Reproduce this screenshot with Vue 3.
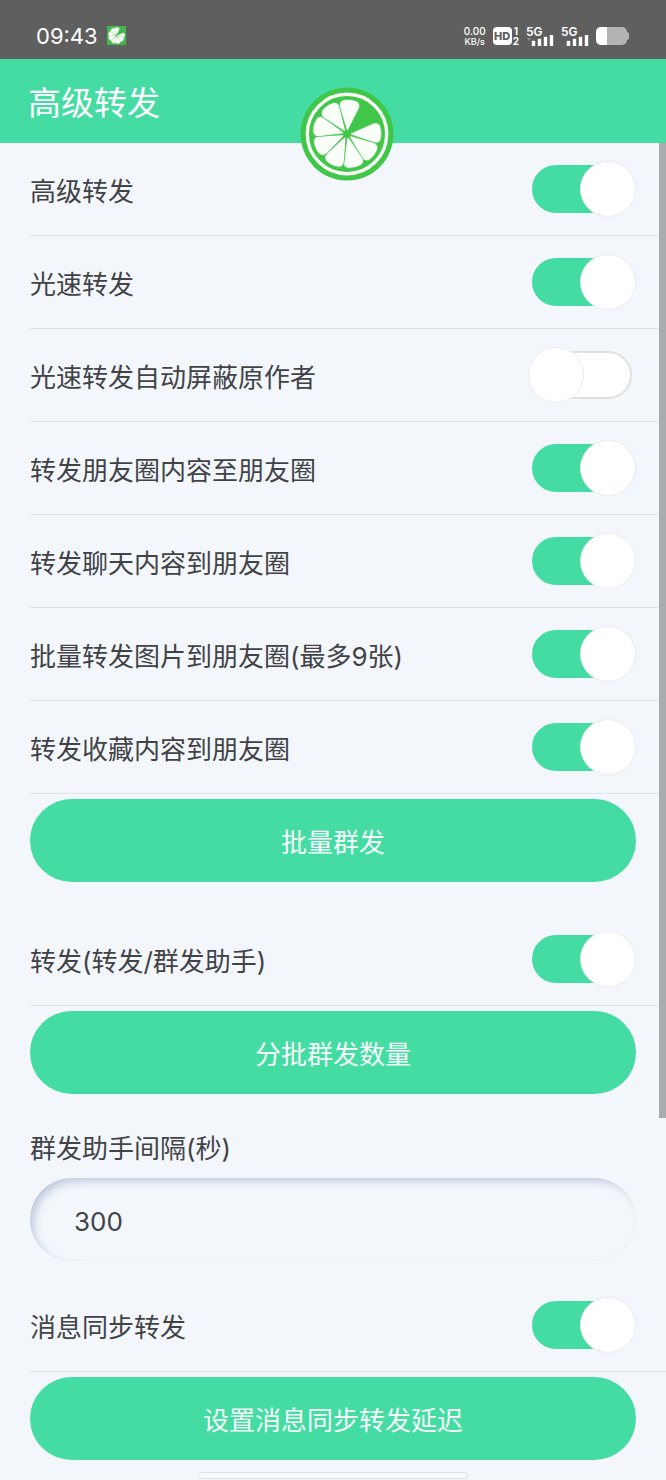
<template>
  <div class="page">
    <div class="status-bar">
      <span class="time">09:43</span>
      <svg class="app-icon" viewBox="0 0 20 20">
        <rect width="20" height="20" fill="#45b650" />
        <g transform="translate(10 10) scale(0.25)">
          <path v-for="a in slices" :key="a" :d="slicePath" :transform="`rotate(${a})`" fill="#f4fff2" />
        </g>
      </svg>
      <div class="status-right">
        <div class="speed">
          <span class="speed-num">0.00</span>
          <span class="speed-unit">KB/s</span>
        </div>
        <div class="hd">
          <span class="hd-badge">HD</span>
          <span class="hd-sim"><span>1</span><span>2</span></span>
        </div>
        <div v-for="sim in 2" :key="sim" class="signal">
          <span>5G</span>
          <svg viewBox="0 0 28 11">
            <path v-if="sim === 1" d="M1 3h4l-2 3z" fill="#8c8c8c" />
            <path d="M6 6h3v5h-3zM12 4h3v7h-3zM18 2h3v9h-3zM24 0h3v11h-3z" fill="#fff" stroke="#fff" stroke-width="0.4" />
          </svg>
        </div>
        <svg class="battery" viewBox="0 0 34 18">
          <rect x="29" y="5" width="4" height="8" rx="2" fill="#b4b4b4" />
          <rect width="31" height="18" rx="5" fill="#b4b4b4" />
          <path d="M11 0H5a5 5 0 0 0-5 5v8a5 5 0 0 0 5 5h6z" fill="#fff" />
        </svg>
      </div>
    </div>

    <header class="header">
      <h1>高级转发</h1>
      <svg class="logo" viewBox="-47 -47 94 94">
        <circle r="46.5" fill="#40c648" />
        <circle r="39.7" fill="none" stroke="#f8fff5" stroke-width="3.4" />
        <path
          v-for="a in slices"
          :key="a"
          :d="slicePath"
          :transform="`rotate(${a})`"
          fill="#fbfffa"
          stroke="#40c648"
          stroke-width="0.7"
        />
        <circle r="4" fill="#40c648" />
      </svg>
    </header>

    <main>
      <label v-for="item in forwardItems" :key="item.name" class="row">
        <span>{{ item.name }}</span>
        <input v-model="item.on" type="checkbox" class="switch" />
      </label>
      <button class="btn">批量群发</button>

      <label class="row row-helper">
        <span>转发(转发/群发助手)</span>
        <input v-model="helper" type="checkbox" class="switch" />
      </label>
      <button class="btn">分批群发数量</button>

      <label class="field-label" for="interval">群发助手间隔(秒)</label>
      <input id="interval" v-model="interval" class="field" type="text" />

      <label class="row row-sync">
        <span>消息同步转发</span>
        <input v-model="sync" type="checkbox" class="switch" />
      </label>
      <button class="btn">设置消息同步转发延迟</button>
      <div class="scrollbar"></div>
    </main>

    <div class="home-bar"></div>
  </div>
</template>

<script setup>
import { ref } from "vue";

const forwardItems = ref([
  { name: "高级转发", on: true },
  { name: "光速转发", on: true },
  { name: "光速转发自动屏蔽原作者", on: false },
  { name: "转发朋友圈内容至朋友圈", on: true },
  { name: "转发聊天内容到朋友圈", on: true },
  { name: "批量转发图片到朋友圈(最多9张)", on: true },
  { name: "转发收藏内容到朋友圈", on: true },
]);

const helper = ref(true);
const sync = ref(true);
const interval = ref("300");

// 青柠果瓣,缺右上角一瓣
const slices = [88, 128, 167, 206, 246, 285, 325, 365];
const slicePath = "M0 -2L-9.6 -26Q-11.5 -31 -7 -33.5Q0 -36 7 -33.5Q11.5 -31 9.6 -26Z";
</script>

<style>
body {
  margin: 0;
  background: #f3f7fc;
}
</style>

<style scoped>
.page {
  min-height: 100vh;
  background: #f3f7fc;
  color: #414347;
  font-family: Inter, "Noto Sans CJK SC", sans-serif;
  font-size: 26px;
}

.status-bar {
  display: flex;
  align-items: center;
  box-sizing: border-box;
  height: 59px;
  padding: 12px 36px 0;
  background: #5f5f5f;
  color: #fff;
}

.time {
  font-size: 22px;
}

.app-icon {
  width: 19px;
  height: 19px;
  margin-left: 9px;
}

.status-right {
  display: flex;
  align-items: center;
  margin-left: auto;
  gap: 7px;
}

.speed {
  display: flex;
  flex-direction: column;
  align-items: center;
  font-weight: 500;
}

.speed-num {
  font-size: 10px;
  line-height: 12px;
}

.speed-unit {
  font-size: 9px;
  line-height: 10px;
}

.hd {
  display: flex;
  align-items: center;
  gap: 1px;
}

.hd-badge {
  width: 19px;
  height: 18px;
  border-radius: 4px;
  background: #fff;
  color: #5f5f5f;
  font-size: 11px;
  font-weight: 800;
  line-height: 18px;
  text-align: center;
}

.hd-sim {
  display: flex;
  flex-direction: column;
  align-items: center;
  font-size: 10px;
  font-weight: 700;
  line-height: 10px;
}

.signal {
  display: flex;
  flex-direction: column;
  width: 28px;
  height: 20px;
  font-size: 12px;
  font-weight: 600;
  line-height: 11px;
}

.signal svg {
  width: 28px;
  height: 11px;
  margin-top: -2px;
}

.battery {
  width: 34px;
  height: 18px;
}

.header {
  position: relative;
  display: flex;
  align-items: center;
  height: 84px;
  padding: 0 28px;
  background: #45dca4;
}

.header h1 {
  margin: 0;
  color: #fff;
  font-size: 33px;
  font-weight: 400;
}

.logo {
  position: absolute;
  z-index: 1;
  top: 28px;
  left: 45%;
  width: 94px;
  height: 94px;
}

main {
  position: relative;
  padding-left: 30px;
}

.row {
  display: flex;
  align-items: center;
  justify-content: space-between;
  box-sizing: border-box;
  height: 93px;
  padding-right: 30px;
  border-bottom: 1px solid #e0e4e9;
}

.row-helper {
  margin-top: 31px;
}

.row-sync {
  margin-top: 18px;
}

.switch {
  position: relative;
  flex: none;
  width: 108px;
  height: 56px;
  margin: 0;
  appearance: none;
}

.switch::before {
  content: "";
  position: absolute;
  inset: 4px;
  box-sizing: border-box;
  border: 2px solid #dfe1e4;
  border-radius: 24px;
  background: #fff;
}

.switch::after {
  content: "";
  position: absolute;
  top: 0;
  left: 0;
  box-sizing: border-box;
  width: 56px;
  height: 56px;
  border: 1px solid #e9ebee;
  border-radius: 50%;
  background: #fff;
}

.switch:checked::before {
  border-color: #45dca4;
  background: #45dca4;
}

.switch:checked::after {
  left: auto;
  right: 0;
}

.btn {
  display: block;
  width: calc(100% - 30px);
  height: 83px;
  margin: 5px 0 0;
  padding: 0;
  border: none;
  border-radius: 42px;
  background: #45dca4;
  color: #f4fffa;
  font: inherit;
}

.field-label {
  display: block;
  padding: 35px 0 9px;
  line-height: 40px;
}

.field {
  display: block;
  box-sizing: border-box;
  width: calc(100% - 30px);
  height: 83px;
  padding: 4px 44px 0;
  border: none;
  border-radius: 42px;
  outline: none;
  background: #f3f7fc;
  box-shadow: inset 5px 5px 10px -2px #b9c5d8, inset 0 0 3px #eceff3;
  color: inherit;
  font: inherit;
}

.scrollbar {
  position: absolute;
  top: 0;
  right: 0;
  width: 7px;
  height: 74%;
  background: #a8acaf;
}

.home-bar {
  box-sizing: border-box;
  width: 270px;
  height: 7px;
  margin: 12px auto 0;
  border: 1px solid #dde1e6;
  border-radius: 4px;
  background: #f8fafd;
}
</style>
